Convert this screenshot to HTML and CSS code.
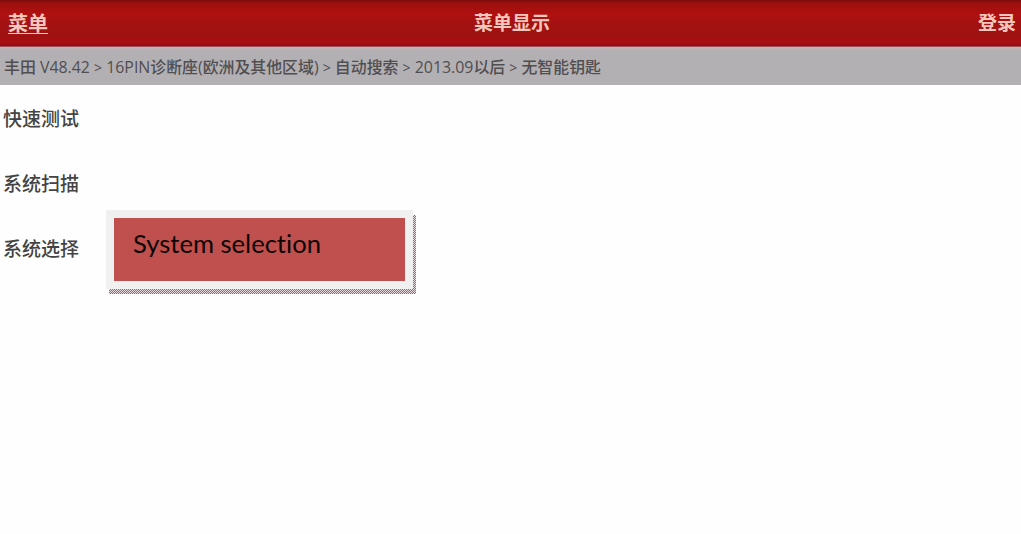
FILE: index.html
```html
<!DOCTYPE html>
<html lang="zh-CN">
<head>
    <meta charset="UTF-8">
    <meta name="viewport" content="width=device-width, initial-scale=1.0">
    <title>菜单显示</title>
    <link rel="stylesheet" href="styles.css">
</head>
<body>
    <header class="topbar">
        <a class="menu-link">菜单</a>
        <h1>菜单显示</h1>
        <a class="login-link">登录</a>
    </header>
    <nav class="breadcrumb">丰田 V48.42 <span class="sep">&gt;</span> 16PIN诊断座(欧洲及其他区域) <span class="sep">&gt;</span> 自动搜索 <span class="sep">&gt;</span> 2013.09以后 <span class="sep">&gt;</span> 无智能钥匙</nav>
    <ul class="menu">
        <li>快速测试</li>
        <li>系统扫描</li>
        <li>系统选择
            <!-- Label over the list -->
            <div class="callout">
                <div class="callout-frame">
                    <div class="callout-text"><span>System selection</span></div>
                </div>
            </div>
        </li>
    </ul>
</body>
</html>
```

FILE: styles.css
```css
body {
    margin: 0;
    height: 534px;
    overflow: hidden;
    background-color: #fefefe;
    font-family: "Open Sans", "Noto Sans CJK SC", sans-serif;
    color: #444;
}
.topbar {
    display: grid;
    grid-template-columns: 1fr auto 1fr;
    align-items: center;
    box-sizing: border-box;
    height: 47px;
    padding: 0 5px 3px 8px;
    background: linear-gradient(#7a0e0c 0, #9c100e 3px, #b01010 14px, #a31212 24px, #9e1211 36px, #ab0d13 43px, #861018 46px, #b58a8e 47px);
    color: #f6c6bc;
    font-size: 19px;
    font-weight: 700;
}
.topbar h1 {
    margin: 0;
    font-size: 19px;
    font-weight: 700;
}
.menu-link {
    justify-self: start;
    font-size: 20px;
    text-decoration: underline;
    text-decoration-thickness: 1px;
    text-underline-offset: 2px;
}
.login-link {
    justify-self: end;
}
.breadcrumb {
    height: 38px;
    padding-left: 4px;
    background: linear-gradient(#c2b6b8 0, #b3b0b3 4px);
    font-size: 15.9px;
    font-weight: 500;
    line-height: 40px;
    white-space: nowrap;
    color: #504e51;
}
.sep {
    font-size: 14px;
}
.menu {
    margin: 0;
    padding: 1px 0 0;
    list-style: none;
}
.menu li {
    position: relative;
    height: 65px;
    padding-left: 3px;
    font-size: 19px;
    font-weight: 500;
    line-height: 66px;
}
.callout {
    position: absolute;
    left: 106px;
    top: -6px;
}
.callout-frame {
    position: relative;
    width: 291px;
    height: 63px;
    padding: 8px;
    background-color: #f1f0f0;
}
/* Dotted shadow */
.callout-frame::before {
    content: "";
    position: absolute;
    z-index: -1;
    left: 3px;
    top: 5px;
    width: 307px;
    height: 79px;
    background: repeating-conic-gradient(#9a626d 0 25%, #ecdfe1 0 50%) 0 0 / 2px 2px;
}
.callout-text {
    height: 63px;
    padding-left: 19px;
    background-color: #c0504d;
    color: #0c0404;
    font-family: Lato, sans-serif;
    font-size: 25.6px;
    font-weight: 400;
    font-variant-ligatures: none;
    line-height: 51px;
    white-space: nowrap;
}
```
